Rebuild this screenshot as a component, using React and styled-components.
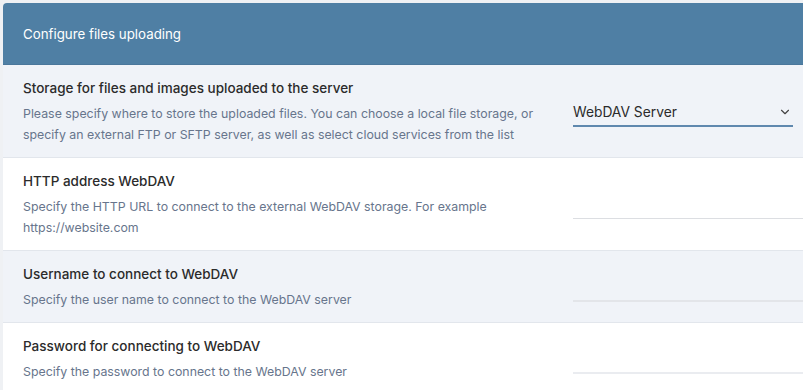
import React from 'react'
import styled, { createGlobalStyle } from 'styled-components'
import { ChevronDown } from 'lucide-react'

const GlobalStyle = createGlobalStyle`
  html, body {
    margin: 0;
    padding: 0;
    background: #eff1f4;
    overflow: hidden;
  }
  body {
    padding: 3px 0 0 3px;
    font-family: Inter, "Liberation Sans", sans-serif;
    -webkit-font-smoothing: antialiased;
  }
`

const Card = styled.div`
  width: 800px;
  background: #fff;
  border-top-left-radius: 4px;
  overflow: hidden;
`

const Header = styled.div`
  height: 61px;
  background: #4f7fa4;
  color: #fff;
  font-size: 13.3px;
  display: flex;
  align-items: center;
  padding: 0 20px;
  border-bottom: 1px solid #4a779b;
`

const Row = styled.div`
  display: grid;
  grid-template-columns: 550px 1fr;
  align-items: center;
  padding: 13px 0 12px 20px;
  background: ${p => (p.shade ? '#f0f3f8' : '#fff')};
  border-bottom: 1px solid #e2e6ec;
`

const Info = styled.div`
  display: flex;
  flex-direction: column;
`

const Title = styled.div`
  font-size: 13.5px;
  line-height: 20px;
  font-weight: 500;
  color: #2b2b2b;
  margin-bottom: 5px;
`

const Desc = styled.div`
  font-size: 12.35px;
  line-height: 21px;
  color: #67758c;
  max-width: 525px;
`

const Control = styled.div`
  display: flex;
  align-items: center;
  padding-top: ${p => p.offset || 0}px;
`

const Select = styled.div`
  width: 220px;
  height: 30px;
  display: flex;
  align-items: center;
  justify-content: space-between;
  box-sizing: border-box;
  border-bottom: 2px solid #5f88ae;
  font-size: 13.8px;
  color: #2b2b2b;
  padding-top: 2px;
  svg {
    color: #444;
    margin-right: 1px;
  }
`

const Input = styled.input`
  width: 100%;
  height: 28px;
  box-sizing: border-box;
  border: none;
  border-bottom: ${p => p.line || '1px solid #dcdfe4'};
  background: transparent;
  outline: none;
  font-size: 14px;
  padding: 0;
`

const settings = [
  {
    title: 'HTTP address WebDAV',
    desc: 'Specify the HTTP URL to connect to the external WebDAV storage. For example https://website.com',
    line: '1px solid #dcdee2',
    offset: 0,
  },
  {
    title: 'Username to connect to WebDAV',
    desc: 'Specify the user name to connect to the WebDAV server',
    line: '2px solid #e3e5e9',
    shade: true,
    offset: 2,
  },
  {
    title: 'Password for connecting to WebDAV',
    desc: 'Specify the password to connect to the WebDAV server',
    line: '2px solid #eaecf0',
    offset: 2,
  },
]

export default function App() {
  return (
    <>
      <GlobalStyle />
      <Card>
        <Header>Configure files uploading</Header>
        <Row shade>
          <Info>
            <Title>Storage for files and images uploaded to the server</Title>
            <Desc>
              Please specify where to store the uploaded files. You can choose a local file storage, or
              specify an external FTP or SFTP server, as well as select cloud services from the list
            </Desc>
          </Info>
          <Control>
            <Select>
              <span>WebDAV Server</span>
              <ChevronDown size={14} strokeWidth={2} />
            </Select>
          </Control>
        </Row>
        {settings.map(s => (
          <Row key={s.title} shade={s.shade}>
            <Info>
              <Title>{s.title}</Title>
              <Desc>{s.desc}</Desc>
            </Info>
            <Control offset={s.offset}>
              <Input line={s.line} type={s.title.startsWith('Password') ? 'password' : 'text'} />
            </Control>
          </Row>
        ))}
      </Card>
    </>
  )
}
